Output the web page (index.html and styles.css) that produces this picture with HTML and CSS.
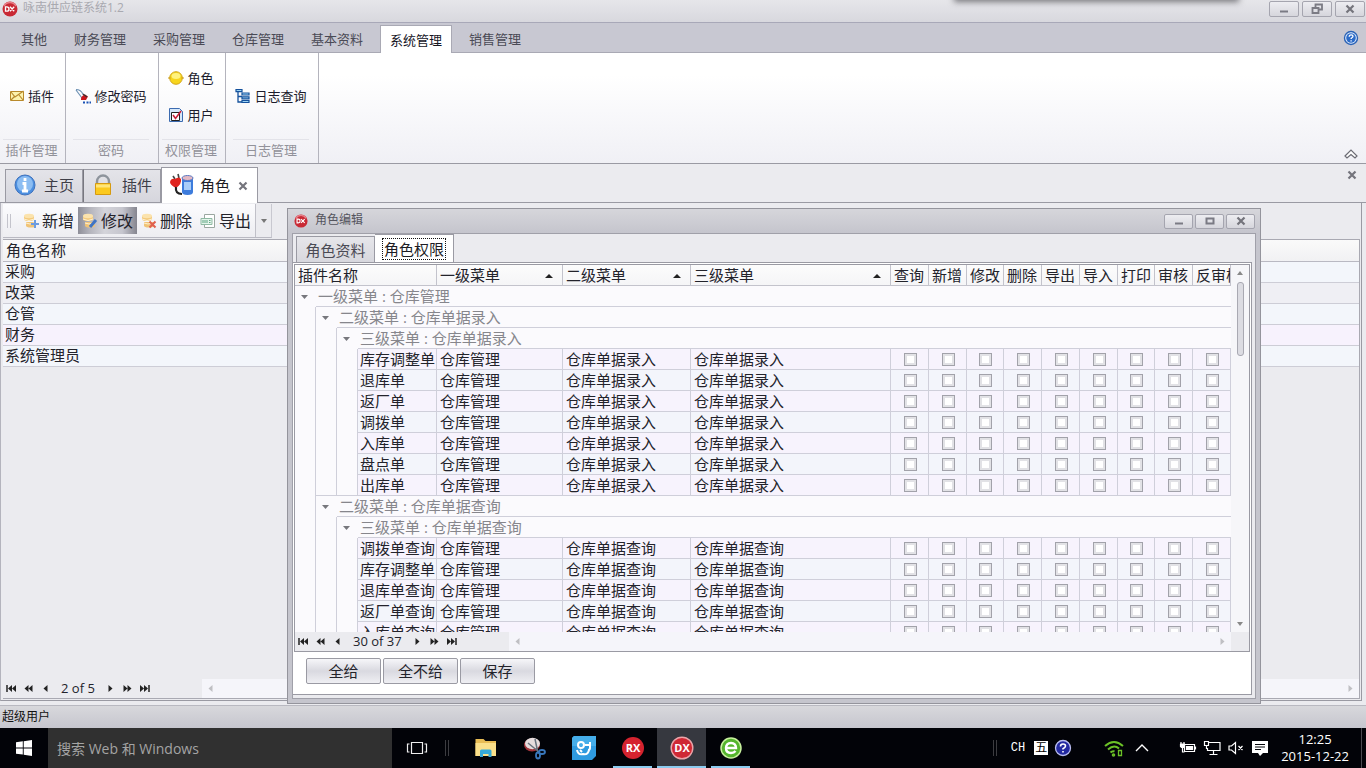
FILE: index.html
```html
<!DOCTYPE html>
<html lang="zh-CN">
<head>
<meta charset="utf-8">
<title>咏南供应链系统1.2</title>
<link rel="stylesheet" href="styles.css">
</head>
<body>
<svg class="defs" aria-hidden="true">
  <symbol id="dx" viewBox="0 0 16 16"><circle cx="8" cy="8" r="7.5" fill="#c92a35"/><path d="M2 5a7 7 0 0 1 12 0" fill="none" stroke="#e8808a" stroke-width="1.5"/><path d="M3.500 5.800v4.400h1.300q2.200 0 2.200-2.200T4.800 5.800zM8 5.800l4.200 4.400M12.200 5.800L8 10.200" fill="none" stroke="#fff" stroke-width="1.300"/></symbol>
  <symbol id="first" viewBox="0 0 11 9"><path d="M1 1v7" stroke="#222" stroke-width="1.500"/><path d="M6 1v7L2 4.500zM10 1v7L6 4.500z" fill="#222"/></symbol>
  <symbol id="prev2" viewBox="0 0 11 9"><path d="M5.500 1v7L1.500 4.500zM9.500 1v7L5.500 4.500z" fill="#222"/></symbol>
  <symbol id="prev" viewBox="0 0 11 9"><path d="M7.500 1v7L3.500 4.500z" fill="#222"/></symbol>
  <symbol id="next" viewBox="0 0 11 9"><path d="M3.500 1v7l4-3.500z" fill="#222"/></symbol>
  <symbol id="next2" viewBox="0 0 11 9"><path d="M1.500 1v7l4-3.500zM5.500 1v7l4-3.500z" fill="#222"/></symbol>
  <symbol id="last" viewBox="0 0 11 9"><path d="M1 1v7l4-3.500zM5 1v7l4-3.500z" fill="#222"/><path d="M10 1v7" stroke="#222" stroke-width="1.500"/></symbol>
  <symbol id="min" viewBox="0 0 12 12"><path d="M2 8.500h8" stroke="#7b7b84" stroke-width="2"/></symbol>
  <symbol id="close" viewBox="0 0 12 12"><path d="M2.500 2.500l7 7M9.500 2.500l-7 7" stroke="#74747c" stroke-width="2.200"/></symbol>
  <symbol id="db" viewBox="0 0 16 16"><path d="M1 3v3q0 2 5 2t5-2V3z" fill="#f3ca7d"/><path d="M3 9v3.500q0 2 5 2t5-2V9z" fill="#f0c377"/><ellipse cx="6" cy="3" rx="5" ry="2.200" fill="#fbe3ad"/><path d="M1 6q5 3 10 0M3 10q4 2 8 0" fill="none" stroke="#fff1cf"/></symbol>
</svg>

<header class="titlebar">
  <svg class="i16"><use href="#dx"/></svg>
  <h1>咏南供应链系统1.2</h1>
  <div class="drop"></div>
  <div class="winbtns">
    <button aria-label="最小化"><svg class="i12"><use href="#min"/></svg></button>
    <button aria-label="还原"><svg class="i12" viewBox="0 0 12 12" fill="none" stroke="#7b7b84" stroke-width="1.800"><path d="M4.500 4.500v-3h6.500v5H8"/><path d="M1.500 5h6v5h-6z"/></svg></button>
    <button aria-label="关闭"><svg class="i12"><use href="#close"/></svg></button>
  </div>
</header>

<nav class="menu">
  <button>其他</button><button>财务管理</button><button>采购管理</button><button>仓库管理</button><button>基本资料</button><button class="on">系统管理</button><button>销售管理</button>
  <button class="help" aria-label="帮助"><svg class="i16" viewBox="0 0 16 16"><circle cx="8" cy="8" r="6.500" fill="#eaf3ff" stroke="#2a62b5" stroke-width="1.400"/><circle cx="8" cy="8" r="4.800" fill="#2c6bc8"/><path d="M6.200 6.800q0-2 2-2 1.800 0 1.800 1.500 0 1-1.800 2v.7M8.100 10.200v1.300" fill="none" stroke="#fff" stroke-width="1.300"/></svg></button>
</nav>

<section class="ribbon">
  <div class="group g1">
    <div class="items"><button><svg class="i16" viewBox="0 0 16 16"><path d="M1.500 3.500h13v9h-13z" fill="#fdf3ae" stroke="#b98a2c"/><path d="M2 4l4 5 8.500-6M2 12l4-4M14 12l-4-5" fill="none" stroke="#b98a2c" stroke-width="1.200"/></svg>插件</button></div>
    <div class="caption">插件管理</div>
  </div>
  <div class="group g2">
    <div class="items"><button><svg class="i16" viewBox="0 0 16 16"><path d="M1 2l6 8M1 1.500q5 0 7 5" fill="none" stroke="#6f93b5" stroke-width="1.200"/><path d="M6 11q0-3 4-4.500l3 2L11 12H6z" fill="#c9141b"/><path d="M8 6l4 3" stroke="#333" stroke-width="1.200"/><path d="M8 14.500h2M11.500 14.500h2M14.500 14.500H16" stroke="#1b53b5" stroke-width="2"/></svg>修改密码</button></div>
    <div class="caption">密码</div>
  </div>
  <div class="group g3">
    <div class="items two">
      <button><svg class="i16" viewBox="0 0 16 16"><circle cx="8" cy="8" r="6.300" fill="#f7d51c" stroke="#d2a51a"/><ellipse cx="8" cy="6" rx="4.500" ry="3" fill="#fff27e"/><path d="M0 8h2.500M13.500 8H16" stroke="#c99a12"/></svg>角色</button>
      <button><svg class="i16" viewBox="0 0 16 16"><path d="M1.500 1.500h10l3 3v10h-13z" fill="#d6e8fa" stroke="#3c6bb0"/><path d="M3.500 5.500h8v8h-8z" fill="#fff" stroke="#222"/><path d="M5 8l2.500 3.500L13 4" fill="none" stroke="#c8203a" stroke-width="1.600"/></svg>用户</button>
    </div>
    <div class="caption">权限管理</div>
  </div>
  <div class="group g4">
    <div class="items"><button><svg class="i16" viewBox="0 0 16 16"><path d="M3 4v10h4M3 8.500h4" fill="none" stroke="#14519c" stroke-width="1.300"/><path d="M1 1.500h6v2.200H1zM7 5h7v2H7zM7 8.800h7v2H7zM7 12.500h7v2H7z" fill="#9cd4f5" stroke="#14519c" stroke-width="1.200"/></svg>日志查询</button></div>
    <div class="caption">日志管理</div>
  </div>
  <button class="fold" aria-label="折叠"><svg class="i16" viewBox="0 0 16 16"><path d="M2 10l6-6 6 6-2 2L8 8.500 4 12z" fill="#fff" stroke="#6c6c74" stroke-width="1.200"/></svg></button>
</section>

<nav class="doctabs">
  <button><svg class="i22" viewBox="0 0 22 22"><circle cx="11" cy="11" r="10" fill="#4c8fe0" stroke="#3f72bd"/><circle cx="11" cy="10" r="8" fill="#8cbdf2"/><path d="M11 4v3M8.500 9.500H11V17M8 17h6" fill="none" stroke="#fff" stroke-width="2.800"/></svg>主页</button>
  <button><svg class="i22" viewBox="0 0 22 22"><path d="M5 10V7.500a6 6 0 0 1 12 0V10" fill="none" stroke="#8e949c" stroke-width="2.400"/><path d="M3.500 9.500h15v11h-15z" fill="#fbc91f" stroke="#d69a10"/><path d="M4 10.500h14v3H4z" fill="#ffe57a"/></svg>插件</button>
  <button class="on"><svg class="i24" viewBox="0 0 24 22"><path d="M12 4v14q0 3 5.500 3t5.500-3V4z" fill="#3d7cdc"/><path d="M14 8h7v8h-7z" fill="#a9cdf8"/><ellipse cx="17.500" cy="4" rx="5.500" ry="2.500" fill="#e3b9c4" stroke="#5b78c0"/><path d="M3 2l2 3M8 0l1 4" stroke="#444" stroke-width="1.600"/><path d="M0 8q1-4 5-3 4-3 6 0 1 5-5 9Q0 11 0 8z" fill="#e0241f"/><path d="M6 13q-1 7 6 7" fill="none" stroke="#222" stroke-width="2.200"/></svg>角色<svg class="i12"><use href="#close"/></svg></button>
  <button class="closeall" aria-label="关闭页面"><svg class="i12"><use href="#close"/></svg></button>
</nav>

<main class="workspace">
  <div class="pane">
    <div class="toolbar">
      <i class="grip"></i>
      <button><svg class="i16"><use href="#db"/><path d="M12 7v8M8 11h8" stroke="#6c9be0" stroke-width="2"/></svg>新增</button>
      <button class="hot"><svg class="i16"><use href="#db"/><path d="M8 14l6-7" stroke="#3f74c4" stroke-width="3"/></svg>修改</button>
      <button><svg class="i16"><use href="#db"/><path d="M8.500 8.500l6 6M14.500 8.500l-6 6" stroke="#e0604f" stroke-width="2"/></svg>删除</button>
      <button><svg class="i16" viewBox="0 0 16 16"><path d="M4.500 1.500h10v13h-10z" fill="#fff" stroke="#9aa7a0"/><path d="M1 5.500h11v6H1z" fill="#e3f4ea" stroke="#8fb9a3"/><path d="M3 7v3M5 7v3M7 7v3M9 7.500h1.500M9 9.500h1.500" stroke="#5fa583"/></svg>导出</button>
      <button class="more" aria-label="更多"><svg class="i8" viewBox="0 0 8 8"><path d="M1 2h6L4 6z" fill="#777"/></svg></button>
    </div>
    <div class="rolegrid">
      <table>
        <thead><tr><th>角色名称</th></tr></thead>
        <tbody>
          <tr><td>采购</td></tr>
          <tr class="cur"><td>改菜</td></tr>
          <tr><td>仓管</td></tr>
          <tr class="alt"><td>财务</td></tr>
          <tr><td>系统管理员</td></tr>
        </tbody>
      </table>
      <div class="pager">
        <button aria-label="首条"><svg class="nav"><use href="#first"/></svg></button><button aria-label="上一页"><svg class="nav"><use href="#prev2"/></svg></button><button aria-label="上一条"><svg class="nav"><use href="#prev"/></svg></button>
        <span>2 of 5</span>
        <button aria-label="下一条"><svg class="nav"><use href="#next"/></svg></button><button aria-label="下一页"><svg class="nav"><use href="#next2"/></svg></button><button aria-label="末条"><svg class="nav"><use href="#last"/></svg></button>
        <div class="hscroll wide"><svg class="nav"><use href="#prev"/></svg><svg class="nav"><use href="#next"/></svg></div>
      </div>
    </div>
  </div>

  <section class="dialog" role="dialog" aria-label="角色编辑">
    <header>
      <svg class="i14" viewBox="0 0 16 16"><use href="#dx"/></svg>
      <h2>角色编辑</h2>
      <div class="winbtns">
        <button aria-label="最小化"><svg class="i12"><use href="#min"/></svg></button>
        <button aria-label="最大化"><svg class="i12" viewBox="0 0 12 12"><path d="M2.500 3.500h7v5h-7z" fill="none" stroke="#7b7b84" stroke-width="2"/></svg></button>
        <button aria-label="关闭"><svg class="i12"><use href="#close"/></svg></button>
      </div>
    </header>
    <div class="body">
      <div class="subtabs"><button>角色资料</button><button class="on"><span>角色权限</span></button></div>
      <div class="sheet">
        <div class="permgrid">
          <div class="view">
            <div class="clip">
              <table class="perm">
                <colgroup><col class="ind"><col class="ind"><col class="ind"><col class="c-name"><col class="c-m1"><col class="c-m2"><col><col class="ck"><col class="ck"><col class="ck2"><col class="ck"><col class="ck"><col class="ck"><col class="ck2"><col class="ck"><col class="ck"></colgroup>
                <thead><tr><th colspan="4">插件名称</th><th class="asc">一级菜单</th><th class="asc">二级菜单</th><th class="asc">三级菜单</th><th>查询</th><th>新增</th><th>修改</th><th>删除</th><th>导出</th><th>导入</th><th>打印</th><th>审核</th><th>反审核</th></tr></thead>
                <tbody id="rows"></tbody>
              </table>
            </div>
            <div class="vscroll"><svg class="i8" viewBox="0 0 8 8"><path d="M1 6h6L4 2z" fill="#888"/></svg><i></i><svg class="i8 down" viewBox="0 0 8 8"><path d="M1 2h6L4 6z" fill="#888"/></svg></div>
          </div>
          <div class="pager">
            <button aria-label="首条"><svg class="nav"><use href="#first"/></svg></button><button aria-label="上一页"><svg class="nav"><use href="#prev2"/></svg></button><button aria-label="上一条"><svg class="nav"><use href="#prev"/></svg></button>
            <span>30 of 37</span>
            <button aria-label="下一条"><svg class="nav"><use href="#next"/></svg></button><button aria-label="下一页"><svg class="nav"><use href="#next2"/></svg></button><button aria-label="末条"><svg class="nav"><use href="#last"/></svg></button>
            <div class="hscroll"><svg class="nav"><use href="#prev"/></svg><svg class="nav"><use href="#next"/></svg></div>
          </div>
        </div>
        <div class="actions"><button>全给</button><button>全不给</button><button>保存</button></div>
      </div>
    </div>
  </section>
</main>

<footer class="status">超级用户</footer>

<div class="taskbar">
  <button class="start" aria-label="开始"><svg class="i16" viewBox="0 0 16 16"><path d="M0 2.300L6.800 1.300v6.200H0zM7.700 1.200L16 0v7.500H7.700zM0 8.400h6.800v6.200L0 13.700zM7.700 8.400H16V16l-8.300-1.200z" fill="#fff"/></svg></button>
  <input class="search" type="text" aria-label="搜索" placeholder="搜索 Web 和 Windows">
  <button class="app view-btn" aria-label="任务视图"><svg class="i22" viewBox="0 0 22 22" fill="none" stroke="#eee" stroke-width="1.200"><path d="M5.500 5.500h11v11h-11zM3.500 7H1.500v8h2M18.500 7h2v8h-2"/></svg></button>
  <i class="bar"></i>
  <div class="apps">
    <button class="app" aria-label="文件资源管理器"><svg class="i24" viewBox="0 0 24 24"><path d="M1.500 3h8l2 2H22v15H1.500z" fill="#e9bd55"/><path d="M1.500 7H22v13H1.500z" fill="#fbe08a"/><path d="M6 21v-6q0-1.500 1.500-1.500h8.500q1.500 0 1.500 1.500v6h-3v-3h-5.500v3z" fill="#35a9d8"/></svg></button>
    <button class="app" aria-label="截图工具"><svg class="i24" viewBox="0 0 24 24"><ellipse cx="9" cy="9" rx="8" ry="6.500" fill="#a2343a"/><ellipse cx="9.500" cy="7.500" rx="7.500" ry="5.800" fill="#e6dcdd"/><path d="M5 7l11 9M12 3l3 14" stroke="#68727d" stroke-width="1.500"/><g fill="none" stroke="#3978bd" stroke-width="1.800"><ellipse cx="19" cy="16" rx="3" ry="2"/><ellipse cx="15" cy="19.500" rx="2" ry="3"/></g></svg></button>
    <button class="app" aria-label="助手"><svg class="i24" viewBox="0 0 24 24"><path d="M2 0h22v20l-4 4H0V2z" fill="#2f9be0"/><path d="M2 0h22v10H0V2z" fill="#45aeea"/><g fill="none" stroke="#fff" stroke-width="2"><circle cx="9" cy="9" r="3"/><path d="M13 9h5v3q0 2-2 2M18 6v2M5 14q1 5 6 4 5 1 6-4M8 14l2 2"/></g></svg></button>
    <button class="app run" aria-label="RX"><svg class="i24" viewBox="0 0 24 24"><circle cx="12" cy="12" r="11" fill="#d5232f"/><text x="12" y="16" text-anchor="middle" class="logo">RX</text></svg></button>
    <button class="app run active" aria-label="DX"><svg class="i24" viewBox="0 0 24 24"><circle cx="12" cy="12" r="10.800" fill="#cf2834" stroke="#eba5aa" stroke-width="1.400"/><text x="12" y="16" text-anchor="middle" class="logo">DX</text></svg></button>
    <button class="app run" aria-label="浏览器"><svg class="i24" viewBox="0 0 24 24"><circle cx="12" cy="12" r="10" fill="#54b52d" stroke="#c8f19e" stroke-width="1.500"/><path d="M6.500 12H17q0-5-5-5t-5 5 5 5q3 0 4.500-2" fill="none" stroke="#fff" stroke-width="2.400"/></svg></button>
  </div>
  <div class="tray">
    <i class="bar"></i>
    <span class="ch">CH</span>
    <span class="wu">五</span>
    <svg class="i18 q" viewBox="0 0 18 18"><circle cx="9" cy="9" r="7.500" fill="#2229a0" stroke="#b9bdf0" stroke-width="1.300"/><path d="M6.500 7.500Q6.500 5 9 5t2.500 2q0 1.200-2.500 2.700v.8M9 12v1.500" fill="none" stroke="#fff" stroke-width="1.600"/></svg>
    <svg class="i20 wifi" viewBox="0 0 20 20" fill="none" stroke="#6cc227" stroke-width="2"><path d="M1 8q9-8 18 0M4 11.500q6-5.500 11-1"/><path d="M6.500 14.500q2-2 4-1"/><circle cx="9.500" cy="17" r=".8"/><path d="M14.500 12.500h3v5h-3z" stroke-width="1.300"/></svg>
    <svg class="i14 up" viewBox="0 0 14 14" fill="none" stroke="#fff" stroke-width="1.400"><path d="M1 10l6-6 6 6"/></svg>
    <svg class="i18" viewBox="0 0 18 18" fill="none" stroke="#fff" stroke-width="1.200"><path d="M5.500 5.500h10v7h-10zM16.500 7.500v3M1 5h5M2 3v2M5 3v2M3.500 8v5h2"/><path d="M7.500 7.500h6v3h-6z" fill="#fff"/><path d="M1.500 5.500h4v2l-1 1h-2l-1-1z" fill="#fff"/></svg>
    <svg class="i18" viewBox="0 0 18 18" fill="none" stroke="#fff" stroke-width="1.200"><path d="M6 3.500h11v8H4.500V9M1.500 2.500h4v4h-4zM3.500 6.500V10M10.500 11.500v3.500M6.500 15.500h8"/></svg>
    <svg class="i18" viewBox="0 0 18 18" fill="none" stroke="#fff" stroke-width="1.200"><path d="M2 7h2.500L8.500 3.500v11L4.500 11H2zM11.500 7l4 4M15.500 7l-4 4"/></svg>
    <svg class="i18" viewBox="0 0 18 18"><path d="M1 2h16v12h-5l-3 3-2-3H1z" fill="#fff"/><path d="M4 5.500h10M4 8h10M4 10.500h6" stroke="#05060a" stroke-width="1.200"/></svg>
    <div class="clock"><div>12:25</div><div>2015-12-22</div></div>
    <button class="desk" aria-label="显示桌面"></button>
  </div>
</div>
<script src="script.js"></script>
</body>
</html>
```
FILE: styles.css
```css
* { box-sizing: border-box; }
body {
  margin: 0; height: 100vh; display: flex; flex-direction: column; overflow: hidden;
  font-family: "Open Sans", "Noto Sans CJK SC", sans-serif; font-size: 15px; line-height: 20px;
  color: #23232b; background: #ebebef;
}
button { font: inherit; color: inherit; background: none; border: 0; padding: 0; white-space: nowrap; }
button, .caption, .status { cursor: default; }
svg { display: block; flex: none; }
h1, h2 { margin: 0; font-weight: 400; }
.defs { position: absolute; width: 0; height: 0; }
.i8 { width: 8px; height: 8px; }
.i12 { width: 12px; height: 12px; }
.i14 { width: 14px; height: 14px; }
.i16 { width: 16px; height: 16px; }
.i18 { width: 18px; height: 18px; }
.i20 { width: 20px; height: 20px; }
.i22 { width: 22px; height: 22px; }
.i24 { width: 24px; height: 24px; }
.nav { width: 11px; height: 9px; }

/* main window title */
.titlebar {
  position: relative; flex: none; height: 23px; display: flex; align-items: flex-start; padding: 0 1px 0 2px; gap: 5px;
  background: linear-gradient(#e6e6ea, #d8d8de); border-bottom: 1px solid #a8a8b8;
}
.titlebar > svg { margin-top: 1px; }
.titlebar h1 { font-size: 12px; line-height: 16px; color: #a9a9b0; }
.drop { position: absolute; top: -6px; left: 70%; right: 129px; height: 6px; box-shadow: 0 0 6px 2px #77777c; }
.winbtns { margin-left: auto; display: flex; gap: 3px; padding-top: 1px; }
.winbtns button {
  width: 30px; height: 16px; display: flex; align-items: center; justify-content: center;
  border: 1px solid #a5a5af; border-radius: 2px; background: linear-gradient(#ededf1, #d6d6dc);
}

/* ribbon */
.menu {
  flex: none; height: 30px; display: flex; align-items: flex-end; gap: 7px; padding: 0 6px 0 11px;
  background: #c8c8d2; border-bottom: 1px solid #a9a9b4; font-size: 13px; color: #4a4a55;
}
.menu button { height: 28px; padding: 0 9px; border: 1px solid transparent; border-bottom: 0; }
.menu .on { background: #fff; border-color: #a9a9b4; color: #15151f; margin-bottom: -1px; }
.menu .help { margin-left: auto; padding: 5px 0 0; height: 24px; align-self: flex-start; }
.ribbon {
  flex: none; height: 111px; display: flex; border-bottom: 1px solid #9a9aa3;
  background: linear-gradient(#fff 20%, #f0f0f5); font-size: 13px;
}
.group { display: flex; flex-direction: column; border-right: 1px solid #b4b4bd; }
.g1 { width: 66px; padding: 0 5px 0 3px; }
.g2 { width: 93px; padding: 0 9px 0 7px; }
.g3 { width: 67px; padding: 0 5px 0 3px; }
.g4 { width: 93px; padding: 0 9px 0 7px; }
.items { flex: 1; display: flex; flex-direction: column; justify-content: center; align-items: center; }
.items.two { gap: 17px; padding-top: 1px; }
.items button { display: flex; align-items: center; gap: 3px; color: #1c1c2c; }
.caption { height: 24px; border-top: 1px solid #e3e3e9; text-align: center; color: #92929a; line-height: 21px; white-space: nowrap; }
.fold { margin: auto 7px 1px auto; }

/* document tabs */
.doctabs { flex: none; height: 39px; display: flex; align-items: flex-end; padding: 0 8px 0 5px; border-bottom: 1px solid #9a9aa3; color: #3e3e48; }
.doctabs button { height: 33px; display: flex; align-items: center; gap: 8px; padding: 0 8px 2px; border: 1px solid #9a9aa3; border-bottom: 0; background: linear-gradient(#e4e4e9, #d6d6dd); }
.doctabs button + button { border-left-color: #77777f; }
.doctabs button.on { height: 36px; margin-bottom: -1px; background: #fff; color: #1c1c24; gap: 6px; border-left-color: #9a9aa3; }
.doctabs .on .i12 { margin: 2px 0 0 1px; }
.doctabs button.closeall { margin: 5px 0 0 auto; height: 12px; align-self: flex-start; border: 0; background: none; padding: 0; }

/* workspace */
.workspace { position: relative; flex: 1; min-height: 0; padding: 0 4px 4px 0; }
.pane { height: 100%; display: flex; flex-direction: column; padding: 1px 1px 1px 2px; border: 1px solid #9a9aa3; border-top: 0; border-left: 1px solid #b4b4bd; }
.toolbar { flex: none; height: 34px; align-self: flex-start; display: flex; align-items: center; font-size: 16px; background: linear-gradient(#fcfcfe, #ededf1); border-bottom: 1px solid #b9b9c2; border-right: 1px solid #c8c8d0; }
.toolbar button { display: flex; align-items: center; gap: 3px; height: 27px; width: 59px; padding-left: 4px; }
.toolbar .hot { background: linear-gradient(90deg, #8e8e98, #b4b4bc 20%, #d4d4da 45%, #c6c6ce 75%, #85858f); }
.toolbar .more { width: 16px; height: 33px; justify-content: center; padding: 0; border-left: 1px solid #c0c0c8; background: #ebebef; }
.grip { width: 4px; height: 14px; margin: 0 8px 0 4px; border: solid #c4c4cc; border-width: 0 1px; }
.rolegrid { flex: 1; min-height: 0; margin-top: 1px; display: flex; flex-direction: column; border: 1px solid #a9a9b2; border-left: 0; }
table { width: 100%; border-spacing: 0; }
th { font-weight: 400; text-align: left; }
.rolegrid th, .rolegrid td { height: 21px; padding: 0 2px 2px; line-height: 18px; border-bottom: 1px solid #cdcdd6; background: #f3f6fb; }
.rolegrid th { height: 22px; padding: 0 3px 2px; border-color: #b9b9c2; background: linear-gradient(#fafafa, #f1f1f3); }
.rolegrid .cur td { background: #efeff4; }
.rolegrid .alt td { background: #f7f2fd; }

.pager { flex: none; height: 19px; display: flex; align-items: center; font-size: 13px; background: #ebebef; }
.pager button { width: 17px; height: 19px; display: flex; align-items: center; justify-content: center; }
.pager > span { margin: 0 7px; line-height: 18px; padding-bottom: 2px; }
.pager button:last-of-type { margin-right: 49px; }
.rolegrid .pager { margin-top: auto; }
.hscroll { flex: 1; align-self: stretch; display: flex; align-items: center; justify-content: space-between; padding: 0 3px; background: #f5f5fa; }
.hscroll svg { opacity: .25; }

/* role editor window */
.dialog {
  position: absolute; left: 287px; right: 105px; top: 5px; bottom: 1px; display: flex; flex-direction: column;
  padding: 0 4px 4px; border: 1px solid #94949c; background: #c5c5cd;
}
.dialog > header { flex: none; height: 24px; margin: 0 -4px; padding: 0 5px 0 6px; display: flex; align-items: center; gap: 7px; background: linear-gradient(#d6d6db, #c5c5cd); }
.dialog h2 { font-size: 12px; line-height: 18px; padding-bottom: 2px; color: #55555e; }
.dialog .winbtns { gap: 2px; padding-top: 0; }
.dialog .winbtns button { width: 29px; height: 15px; }
.body { flex: 1; min-height: 0; display: flex; flex-direction: column; padding: 0 3px 3px 0; border: 1px solid #a0a0a9; background: #ebebef; }
.subtabs { flex: none; height: 28px; display: flex; align-items: flex-end; padding-left: 3px; }
.subtabs button { height: 26px; width: 79px; border: 1px solid #9a9aa3; border-bottom: 0; background: linear-gradient(#e6e6ea, #d8d8de); color: #4a4a54; }
.subtabs button.on { height: 29px; margin-bottom: -1px; border-left: 0; background: #fff; color: #1c1c24; }
.subtabs span { display: inline-block; padding: 0 1px; border: 1px dotted #111; }
.sheet { flex: 1; min-height: 0; display: flex; flex-direction: column; padding: 1px; border: 1px solid #9a9aa3; border-left: 0; background: #fff; }
.permgrid { flex: 1; min-height: 0; display: flex; flex-direction: column; border: 1px solid #9a9aa3; }
.view { flex: 1; min-height: 0; display: flex; background: #fbfafd; }
.clip { flex: 1; min-width: 0; overflow: hidden; }
.perm { table-layout: fixed; }
.ind { width: 21px; }
.c-name { width: 79px; }
.c-m1 { width: 126px; }
.c-m2 { width: 128px; }
.ck { width: 38px; }
.ck2 { width: 37px; }
.perm th, .perm td { height: 21px; padding: 0 3px; line-height: 20px; white-space: nowrap; overflow: hidden; border: solid #cfcfda; border-width: 0 1px 1px 0; }
.perm th { background: linear-gradient(#fcfcfc, #f5f5f7); border-color: #c3c3cc; }
.perm th:nth-child(n+5) { padding-right: 0; }
.perm .asc::after { content: ""; float: right; margin: 9px 6px 0 0; border: 4px solid transparent; border-top: 0; border-bottom-color: #222; }
.perm .g, .perm .tw { color: #86868c; border-right: 0; padding: 0 2px; }
.perm .tw { border-bottom: 0; padding: 0 4px; }
.perm .in { border-bottom: 0; }
.perm .in.end { border-bottom: 1px solid #cfcfda; }
.perm .d { background: #f3f5fb; padding-left: 2px; }
.perm .odd .d { background: #f7f3fd; }
.perm .d + .d { padding-left: 3px; }
.perm .d + .c { padding: 0 0 0 1px; }
.perm input { appearance: none; display: block; margin: 0 auto; width: 13px; height: 13px; border: 1px solid #a2a2aa; background: #fff; box-shadow: inset 0 0 0 2px #e2e2e6; }
.vscroll { flex: none; width: 18px; display: flex; flex-direction: column; align-items: center; background: #f6f6f9; padding: 4px 0; gap: 5px; }
.vscroll i { width: 7px; height: 74px; border: 1px solid #a9a9b2; border-radius: 3px; background: #dcdce2; }
.vscroll .down { margin-top: auto; }
.dialog .hscroll { margin-right: 18px; }
.actions { flex: none; display: flex; gap: 2px; padding: 6px 12px 9px; }
.actions button { width: 75px; height: 26px; border: 1px solid #9a9aa3; border-radius: 2px; background: linear-gradient(#f6f6f9, #d9d9e0 50%, #efeff3); }

.status { flex: none; height: 23px; padding: 0 2px; font-size: 12px; line-height: 22px; color: #111; background: linear-gradient(#d8d8dc, #c6c6ce); border-top: 1px solid #b9b9c1; }

/* system taskbar */
.taskbar { flex: none; height: 40px; display: flex; align-items: center; background: #020308; color: #fff; }
.start { width: 48px; height: 40px; display: flex; align-items: center; justify-content: center; }
.search { width: 344px; height: 40px; border: 0; padding: 0 9px; font: inherit; font-size: 14px; color: #ddd; background: #303030; }
.search::placeholder { color: #a4a4a4; opacity: 1; }
.app { width: 49px; height: 40px; display: flex; align-items: center; justify-content: center; }
.bar { width: 4px; height: 16px; border: solid #3c3c40; border-width: 0 1px; margin: 0 12px 0 4px; }
.apps { display: flex; }
.run { position: relative; }
.run::after { content: ""; position: absolute; left: 5px; right: 5px; bottom: 0; height: 2px; background: #8bcbef; }
.run.active { background: #36383f; }
.run.active::after { left: 0; right: 0; }
.logo { font: bold 11px "Open Sans", sans-serif; fill: #fff; }
.tray { margin-left: auto; display: flex; align-items: center; gap: 6px; height: 40px; }
.tray .bar { margin: 0 8px 0 0; }
.ch { font: 12px/16px "Liberation Mono", monospace; }
.wu { width: 14px; height: 14px; margin-left: 3px; background: #fff; color: #000; font-size: 12px; line-height: 13px; text-align: center; }
.wifi { margin-left: 26px; }
.up { margin-left: 5px; margin-right: 24px; }
.clock { margin-left: 6px; font-size: 13px; line-height: 17px; text-align: center; }
.desk { width: 5px; height: 40px; margin-left: 6px; border-left: 1px solid #4a4a50; }
```
FILE: script.js
```js
const groups = [
  { title: "仓库单据录入", items: ["库存调整单", "退库单", "返厂单", "调拨单", "入库单", "盘点单", "出库单"] },
  { title: "仓库单据查询", items: ["调拨单查询", "库存调整单", "退库单查询", "返厂单查询", "入库单查询"] }
];
const rights = ["查询", "新增", "修改", "删除", "导出", "导入", "打印", "审核", "反审核"];
const arrow = '<svg class="i12" viewBox="0 0 12 12"><path d="M2 4h7L5.500 8z" fill="#77777d"/></svg>';

function groupRow(level, text) {
  return "<tr>" + '<td class="in"></td>'.repeat(level) +
    `<td class="tw">${arrow}</td><td class="g" colspan="${15 - level}">${text}</td></tr>`;
}

let html = groupRow(0, "一级菜单 : 仓库管理");
for (const group of groups) {
  html += groupRow(1, "二级菜单 : " + group.title) + groupRow(2, "三级菜单 : " + group.title);
  group.items.forEach((name, i) => {
    const end = i === group.items.length - 1 ? " end" : "";
    html += `<tr class="${i % 2 ? "" : "odd"}"><td class="in"></td><td class="in${end}"></td><td class="in${end}"></td>` +
      `<td class="d">${name}</td><td class="d">仓库管理</td><td class="d">${group.title}</td><td class="d">${group.title}</td>` +
      rights.map(r => `<td class="d c"><input type="checkbox" aria-label="${name} ${r}"></td>`).join("") + "</tr>";
  });
}
document.getElementById("rows").innerHTML = html;
```
